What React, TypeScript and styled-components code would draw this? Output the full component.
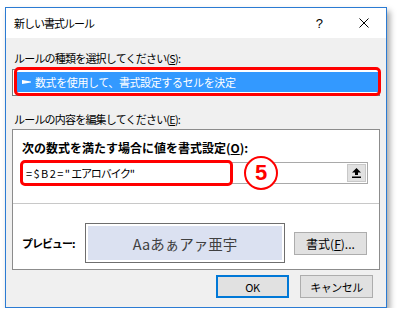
import React from 'react';
import styled, { createGlobalStyle } from 'styled-components';

const GlobalStyle = createGlobalStyle`
  body {
    margin: 0;
    background: #ffffff;
    font-family: "Noto Sans CJK JP", "Noto Sans", sans-serif;
    font-size: 11px;
    color: #000;
  }
`;

const Window = styled.div`
  margin: 7px 0 0 5px;
  width: 380px;
  border: 1px solid #2b7bd3;
  background: #f0f0f0;
  box-shadow: 3px 4px 6px rgba(0, 0, 0, 0.35);
  display: flex;
  flex-direction: column;
`;

const TitleBar = styled.div`
  height: 30px;
  background: #ffffff;
  display: flex;
  align-items: center;
  padding: 0 17px 0 8px;
`;

const Title = styled.div`
  flex: 1;
  font-size: 11px;
  letter-spacing: -1px;
  line-height: 14px;
`;

const HelpMark = styled.span`
  font-family: "Liberation Sans", sans-serif;
  font-size: 13px;
  margin-right: 36px;
`;

const Body = styled.div`
  display: flex;
  flex-direction: column;
  padding: 13px 6px 9px 6px;
`;

const Label = styled.div<{ $gap?: number }>`
  line-height: 14px;
  letter-spacing: -0.8px;
  margin: 0 0 ${p => p.$gap ?? 4}px 2px;
`;

const Key = styled.span`
  text-decoration: underline;
`;

const ListBox = styled.div`
  position: relative;
  border: 1px solid #7a7a7a;
  padding: 2px 1px 3px 4px;
  background: #ffffff;
  margin-bottom: 16px;
`;

const ListItem = styled.div`
  height: 20px;
  background: #3399ff;
  color: #ffffff;
  display: flex;
  align-items: center;
  padding-left: 5px;
  letter-spacing: -0.4px;
`;

const Callout = styled.div<{ $l: number; $t: number; $w: number; $h: number }>`
  position: absolute;
  left: ${p => p.$l}px;
  top: ${p => p.$t}px;
  width: ${p => p.$w}px;
  height: ${p => p.$h}px;
  box-sizing: border-box;
  border: 3px solid #ff0000;
  border-radius: 5px;
  pointer-events: none;
`;

const StepBadge = styled.div`
  position: absolute;
  left: 221px;
  top: -7px;
  width: 34px;
  height: 34px;
  box-sizing: border-box;
  border: 2.5px solid #ff0000;
  border-radius: 50%;
  background: #ffffff;
  color: #ff0000;
  font-family: "Liberation Sans", sans-serif;
  font-weight: bold;
  font-size: 22px;
  display: flex;
  align-items: center;
  justify-content: center;
`;

const Panel = styled.div`
  border: 1px solid #8c8c8c;
  background: #ffffff;
  display: flex;
  flex-direction: column;
  padding: 10px 0 6px 0;
  margin-bottom: 5px;
`;

const PanelLabel = styled.div`
  font-size: 12px;
  font-weight: bold;
  line-height: 15px;
  padding-left: 9px;
  margin-bottom: 7px;
`;

const FormulaInput = styled.div`
  position: relative;
  height: 22px;
  box-sizing: border-box;
  margin: 0 11px 0 9px;
  border: 1px solid #a9a9a9;
  display: flex;
  align-items: center;
`;

const FormulaText = styled.div`
  flex: 1;
  padding-left: 3px;
  letter-spacing: 1.4px;
`;

const Kana = styled.span`
  letter-spacing: -1.2px;
`;

const RefButton = styled.div`
  width: 19px;
  height: 18px;
  margin-right: 1px;
  box-sizing: border-box;
  background: #e1e1e1;
  border: 1px solid #c8c8c8;
  display: flex;
  align-items: center;
  justify-content: center;
`;

const Divider = styled.div`
  height: 1px;
  background: #c8c8c8;
  margin: 19px 0;
`;

const PreviewRow = styled.div`
  display: flex;
  align-items: center;
  padding: 0 11px 0 9px;
`;

const PreviewLabel = styled.div`
  width: 63px;
  font-weight: bold;
  letter-spacing: -1px;
`;

const PreviewBox = styled.div`
  width: 200px;
  height: 40px;
  box-sizing: border-box;
  border: 1px solid #6e6e6e;
  padding: 2px;
  background: #ffffff;
`;

const PreviewFill = styled.div`
  height: 100%;
  background: #dbe1f1;
  color: #404040;
  font-size: 14.5px;
  display: flex;
  align-items: center;
  justify-content: center;
`;

const Button = styled.button<{ $primary?: boolean }>`
  width: 73px;
  height: 23px;
  box-sizing: border-box;
  background: #e1e1e1;
  border: ${p => (p.$primary ? '2px solid #0078d7' : '1px solid #adadad')};
  font-family: "Noto Sans CJK JP", "Noto Sans", sans-serif;
  font-size: 11px;
  color: #000;
  padding: 0;
  letter-spacing: -0.5px;
`;

const FormatButton = styled(Button)`
  margin-left: 9px;
  font-size: 12px;
  letter-spacing: 0;
`;

const ButtonRow = styled.div`
  display: flex;
  justify-content: flex-end;
  gap: 11px;
  padding-right: 7px;
`;

const CloseIcon = () => (
  <svg width="10" height="10" viewBox="0 0 10 10">
    <path d="M0.5 0.5 L9.5 9.5 M9.5 0.5 L0.5 9.5" stroke="#000" strokeWidth="1" />
  </svg>
);

const ItemArrow = () => (
  <svg width="10" height="6" viewBox="0 0 10 6" style={{ marginRight: 3 }}>
    <polygon points="0,1 9,2.6 9,3.4 0,5" fill="#ffffff" />
  </svg>
);

const CollapseIcon = () => (
  <svg width="9" height="10" viewBox="0 0 9 10">
    <polygon points="4.5,0 9,4.5 6,4.5 6,7 3,7 3,4.5 0,4.5" fill="#000" />
    <rect x="0" y="8.5" width="9" height="1.5" fill="#000" />
  </svg>
);

const App: React.FC = () => {
  return (
    <>
      <GlobalStyle />
      <Window>
        <TitleBar>
          <Title>新しい書式ルール</Title>
          <HelpMark>?</HelpMark>
          <CloseIcon />
        </TitleBar>
        <Body>
          <Label>ルールの種類を選択してください(<Key>S</Key>):</Label>
          <ListBox>
            <ListItem>
              <ItemArrow />
              数式を使用して、書式設定するセルを決定
            </ListItem>
            <Callout $l={1} $t={-3} $w={367} $h={29} />
          </ListBox>
          <Label $gap={3}>ルールの内容を編集してください(<Key>E</Key>):</Label>
          <Panel>
            <PanelLabel>次の数式を満たす場合に値を書式設定(<Key>O</Key>):</PanelLabel>
            <FormulaInput>
              <FormulaText>=$B2="<Kana>エアロバイク</Kana>"</FormulaText>
              <RefButton>
                <CollapseIcon />
              </RefButton>
              <Callout $l={-3} $t={-3} $w={213} $h={26} />
              <StepBadge>5</StepBadge>
            </FormulaInput>
            <Divider />
            <PreviewRow>
              <PreviewLabel>プレビュー:</PreviewLabel>
              <PreviewBox>
                <PreviewFill>Aaあぁアァ亜宇</PreviewFill>
              </PreviewBox>
              <FormatButton>書式(<Key>F</Key>)...</FormatButton>
            </PreviewRow>
          </Panel>
          <ButtonRow>
            <Button $primary>OK</Button>
            <Button>キャンセル</Button>
          </ButtonRow>
        </Body>
      </Window>
    </>
  );
};

export default App;
